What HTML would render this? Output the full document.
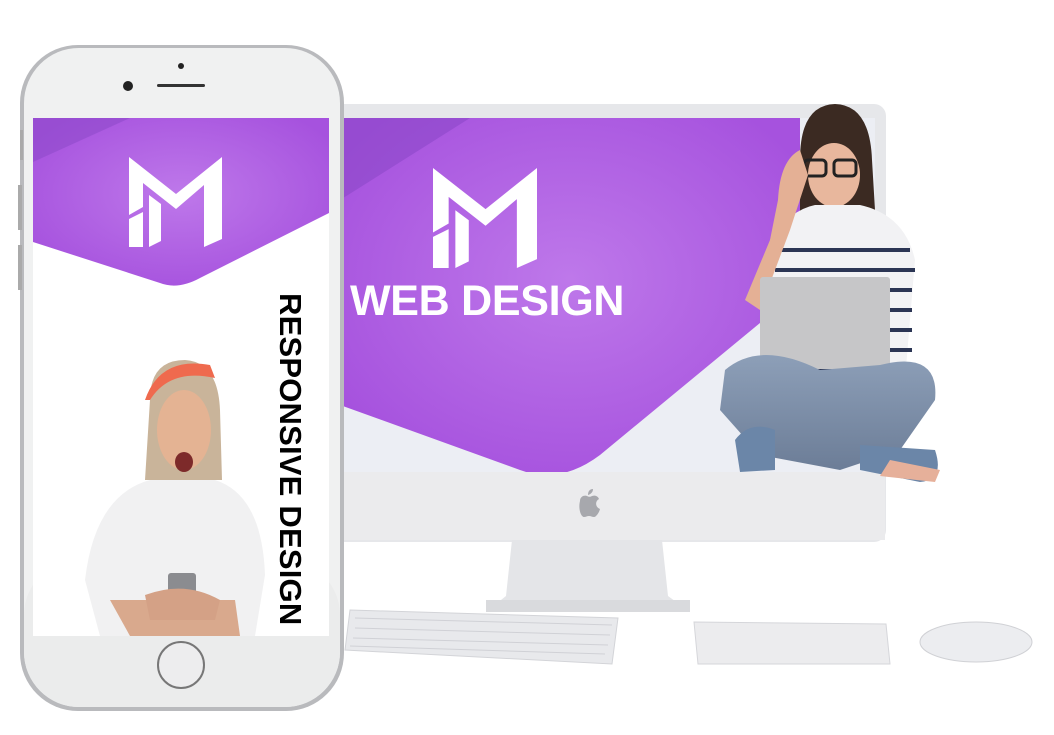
<!DOCTYPE html>
<html><head><style>
body{margin:0;width:1054px;height:735px;background:#fff;position:relative;overflow:hidden;font-family:"Liberation Sans",sans-serif}
.a{position:absolute}
</style></head><body>
<svg class="a" style="left:0;top:0" width="1054" height="735" viewBox="0 0 1054 735">
<defs>
<radialGradient id="pg" cx="0.5" cy="0.45" r="0.6"><stop offset="0" stop-color="#be78ea"/><stop offset="1" stop-color="#a652de"/></radialGradient>
<linearGradient id="jn" x1="0" y1="0" x2="0" y2="1"><stop offset="0" stop-color="#8d9fb8"/><stop offset="1" stop-color="#6c7d97"/></linearGradient>
</defs>
<!-- monitor -->
<rect x="330" y="104" width="556" height="438" rx="12" fill="#e6e7ea"/>
<rect x="340" y="118" width="535" height="354" fill="#eceef4"/>
<path d="M340 118 L800 118 L800 290 L600 455 Q560 485 520 470 L340 405 Z" fill="url(#pg)"/>
<path d="M340 118 L470 118 L340 200 Z" fill="#8c48c8" opacity=".6"/>
<rect x="340" y="472" width="545" height="68" fill="#ebebed"/>
<path d="M588 495c3-1 5-3 5-6-3 0-5 2-5 6zm-8 6c0-5 5-6 7-5 2 1 3 1 5 0 3-1 6 0 7 3-4 2-4 8 1 10-1 4-4 8-6 8s-3-1-5-1-3 1-5 1c-3 0-6-8-4-16z" fill="#a7a8ad"/>
<path d="M512 540 L662 540 L668 596 L690 612 L486 612 L506 596 Z" fill="#e4e5e8"/>
<rect x="486" y="600" width="204" height="12" fill="#d9dadd"/>
<!-- keyboard -->
<path d="M350 610 L618 618 L612 664 L345 650 Z" fill="#e8e9ec" stroke="#d3d4d8"/>
<path d="M355 618 L612 625 M355 628 L610 635 M353 638 L608 645 M350 646 L605 654" stroke="#d0d1d6" stroke-width="1"/>
<path d="M694 622 L886 624 L890 664 L698 664 Z" fill="#ececee" stroke="#d5d6da"/>
<ellipse cx="976" cy="642" rx="56" ry="20" fill="#ecedf0" stroke="#d0d1d5"/>
<!-- woman monitor -->
<path d="M800 160 Q800 105 835 104 Q870 105 872 160 L878 260 L800 260 Z" fill="#3b2a22"/>
<ellipse cx="834" cy="175" rx="26" ry="32" fill="#e8b79d"/>
<rect x="804" y="160" width="22" height="16" rx="4" fill="none" stroke="#222" stroke-width="3"/>
<rect x="834" y="160" width="22" height="16" rx="4" fill="none" stroke="#222" stroke-width="3"/>
<path d="M770 240 Q790 210 815 205 L860 205 Q905 215 915 260 L905 380 L770 380 Z" fill="#f2f2f4"/>
<path d="M780 250h130M775 270h140M772 290h140M772 310h140M772 330h140M772 350h140M772 370h140" stroke="#2b3554" stroke-width="4"/>
<path d="M800 150 Q780 160 778 200 L770 240 L745 300 L760 310 L790 230 L808 175 Z" fill="#e4b095"/>
<rect x="760" y="277" width="130" height="92" rx="3" fill="#c6c6c8"/>
<path d="M725 370 Q760 340 820 370 L880 365 Q940 350 935 400 L900 450 L840 470 L760 455 L720 410 Z" fill="url(#jn)"/>
<path d="M735 440 Q750 420 775 430 L775 470 L740 472 Z" fill="#6b86a8"/>
<path d="M860 445 L935 450 Q945 480 920 482 L860 470 Z" fill="#6b86a8"/>
<path d="M890 460 L940 470 L935 482 L880 476 Z" fill="#e6b09a"/>
<!-- phone -->
<rect x="20" y="45" width="324" height="666" rx="58" fill="#b9babd"/>
<rect x="24" y="48" width="316" height="659" rx="55" fill="#f0f1f1"/>
<rect x="24" y="560" width="316" height="147" rx="55" fill="#ebecec"/>
<rect x="20" y="130" width="3" height="30" fill="#aaa"/><rect x="18" y="185" width="4" height="45" fill="#aaa"/><rect x="18" y="245" width="4" height="45" fill="#aaa"/>
<rect x="33" y="118" width="296" height="518" fill="#fff"/>
<path d="M33 118 L329 118 L329 213 L200 278 Q178 290 160 283 L33 242 Z" fill="url(#pg)"/>
<path d="M33 118 L130 118 L33 162 Z" fill="#8c48c8" opacity=".55"/>
<circle cx="128" cy="86" r="5" fill="#222"/>
<circle cx="181" cy="66" r="3" fill="#222"/>
<rect x="157" y="84" width="48" height="3" rx="1.5" fill="#333"/>
<circle cx="181" cy="665" r="23" fill="#ededee" stroke="#777" stroke-width="2"/>
<!-- woman phone -->
<path d="M150 400 Q150 360 185 360 Q218 362 220 410 L222 480 L145 480 Z" fill="#c9b49a"/>
<path d="M145 400 Q160 356 210 365 L215 378 Q170 368 150 400 Z" fill="#ef6a4e"/>
<ellipse cx="184" cy="430" rx="27" ry="40" fill="#e4b393"/>
<ellipse cx="184" cy="462" rx="9" ry="10" fill="#7d2a2a"/>
<path d="M85 580 Q95 495 150 480 L215 480 Q262 495 265 575 L255 636 L100 636 Z" fill="#f1f1f2"/>
<path d="M110 600 L130 636 L240 636 L235 600 Z" fill="#d9a98d"/>
<rect x="168" y="573" width="28" height="30" rx="3" fill="#8b8c90"/>
<path d="M145 595 Q185 580 220 600 L215 620 L150 620 Z" fill="#d4a186"/>
</svg>
<!-- logos -->
<svg class="a" style="left:129px;top:157px" width="93" height="90" viewBox="0 0 93 90"><path d="M0 0 L47 37 L93 0 L93 82 L75 90 L75 28 L47 52 L14 26 L14 50 L0 58 Z M0 62 L14 55 L14 90 L0 90 Z M20 38 L32 47 L32 84 L20 90 Z" fill="#fff"/></svg>
<svg class="a" style="left:433px;top:168px" width="104" height="100" viewBox="0 0 93 90" preserveAspectRatio="none"><path d="M0 0 L47 37 L93 0 L93 82 L75 90 L75 28 L47 52 L14 26 L14 50 L0 58 Z M0 62 L14 55 L14 90 L0 90 Z M20 38 L32 47 L32 84 L20 90 Z" fill="#fff"/></svg>
<div class="a" style="left:350px;top:277px;font-size:43px;font-weight:bold;color:#fff;white-space:nowrap;letter-spacing:-0.3px">WEB DESIGN</div>
<div class="a" style="left:272px;top:293px;writing-mode:vertical-rl;font-weight:bold;font-size:31px;color:#000;white-space:nowrap;letter-spacing:0.2px">RESPONSIVE DESIGN</div>
</body></html>
